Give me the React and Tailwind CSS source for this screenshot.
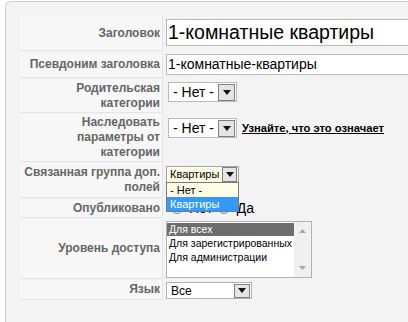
import React from 'react';

const font = "font-['Liberation_Sans',Arial,sans-serif]";

const Arrow = ({ className }) => (
    <span className={`flex items-center justify-center border border-[#7f7f7f] bg-[#e4e4e4] shrink-0 ${className}`}>
        <svg width="8" height="5" viewBox="0 0 8 5"><path d="M0 0h8L4 5z" fill="#111" /></svg>
    </span>
);

const Row = ({ label, h, children }) => (
    <div className={`flex mb-[1px] ${h}`}>
        <div className="w-[143px] shrink-0 flex items-center justify-end text-right pr-[2px] bg-[#f7f7f7] border-b border-r border-[#e4e4e4] text-[12px] leading-[15px] font-bold text-[#666]">
            {label}
        </div>
        <div className="flex-1 pl-[3px] pt-[3px]">{children}</div>
    </div>
);

const Radio = ({ checked }) => (
    <span className="w-[12px] h-[12px] rounded-full border border-[#858585] bg-[#eeeeee] flex items-center justify-center">
        {checked && <span className="w-[6px] h-[6px] rounded-full bg-[#1d4c94]" />}
    </span>
);

export default function App() {
    return (
        <div className={`w-[408px] h-[322px] bg-white overflow-hidden ${font}`}>
            <div className="ml-[5px] mt-[1px] h-[330px] border-l border-t border-[#cfcfcf] rounded-tl-[6px] bg-[#f3f3f3] pl-[14px] pt-[14px]">
                <Row label="Заголовок" h="h-[35px]">
                    <div className="h-[27px] w-[300px] border border-[#b9b9b9] bg-white text-[19.5px] leading-[25px] pl-[1px] text-black whitespace-nowrap">1-комнатные квартиры</div>
                </Row>
                <Row label="Псевдоним заголовка" h="h-[26px]">
                    <div className="-mt-[1px] h-[21px] w-[300px] border border-[#b9b9b9] bg-white text-[14px] leading-[19px] pl-[1px] text-black whitespace-nowrap">1-комнатные-квартиры</div>
                </Row>
                <Row label={<span>Родительская<br />категории</span>} h="h-[34px]">
                    <div className="ml-[2px] h-[20px] w-[69px] border border-[#b9b9b9] bg-white flex items-center justify-between pl-[4px] pr-[1px] text-[14px] text-black">
                        <span>- Нет -</span>
                        <Arrow className="w-[17px] h-[17px]" />
                    </div>
                </Row>
                <Row label={<span>Наследовать<br />параметры от<br />категории</span>} h="h-[48px]">
                    <div className="flex items-center mt-[1px]">
                        <div className="ml-[2px] h-[20px] w-[69px] border border-[#b9b9b9] bg-white flex items-center justify-between pl-[4px] pr-[1px] text-[14px] text-black">
                            <span>- Нет -</span>
                            <Arrow className="w-[17px] h-[17px]" />
                        </div>
                        <span className="ml-[5px] text-[11.2px] font-bold text-black underline whitespace-nowrap">Узнайте, что это означает</span>
                    </div>
                </Row>
                <Row label={<span>Связанная группа доп.<br />полей</span>} h="h-[35px]">
                    <div className="relative w-[73px]">
                        <div className="h-[17px] w-[73px] border border-[#a5a5a5] bg-[#fffde6] flex items-center justify-between pl-[3px] pr-[1px] text-[11px] text-black">
                            <span>Квартиры</span>
                            <Arrow className="w-[15px] h-[15px]" />
                        </div>
                        <div className="absolute left-0 top-[16px] z-10 w-[73px] border border-[#7a7a7a] bg-[#fffde6] text-[11px] leading-[13px] text-black">
                            <div className="px-[3px] py-[0.5px]">- Нет -</div>
                            <div className="px-[3px] py-[0.5px] bg-[#3399ff] text-white">Квартиры</div>
                        </div>
                    </div>
                </Row>
                <Row label="Опубликовано" h="h-[19px]">
                    <div className="flex items-center -mt-[2px] text-[14px] leading-[16px] text-black">
                        <span className="ml-[5px]"><Radio /></span>
                        <span className="ml-[6px]">Нет</span>
                        <span className="ml-[5px]"><Radio checked /></span>
                        <span className="ml-[7px]">Да</span>
                    </div>
                </Row>
                <Row label="Уровень доступа" h="h-[60px]">
                    <div className="-mt-[1px] flex h-[57px] w-[146px] border border-[#b2b2b2] bg-white text-[10.5px] leading-[13px] text-black whitespace-nowrap">
                        <div className="flex-1 pt-[1px] overflow-hidden">
                            <div className="bg-[#6d6d6d] text-white pl-[2px]">Для всех</div>
                            <div className="pl-[2px] mt-[1px]">Для зарегистрированных</div>
                            <div className="pl-[2px] mt-[1px]">Для администрации</div>
                        </div>
                        <div className="w-[17px] shrink-0 bg-[#f0f0f0] flex flex-col items-center justify-between py-[7px]">
                            <svg width="7" height="4" viewBox="0 0 7 4"><path d="M0 4h7L3.5 0z" fill="#a6a6a6" /></svg>
                            <svg width="7" height="4" viewBox="0 0 7 4"><path d="M0 0h7L3.5 4z" fill="#a6a6a6" /></svg>
                        </div>
                    </div>
                </Row>
                <Row label="Язык" h="h-[20px]">
                    <div className="-mt-[1px] h-[17px] w-[86px] border border-[#b2b2b2] bg-white flex items-center justify-between pl-[4px] pr-[1px] text-[12px] text-black">
                        <span>Все</span>
                        <Arrow className="w-[16px] h-[14px]" />
                    </div>
                </Row>
            </div>
        </div>
    );
}
